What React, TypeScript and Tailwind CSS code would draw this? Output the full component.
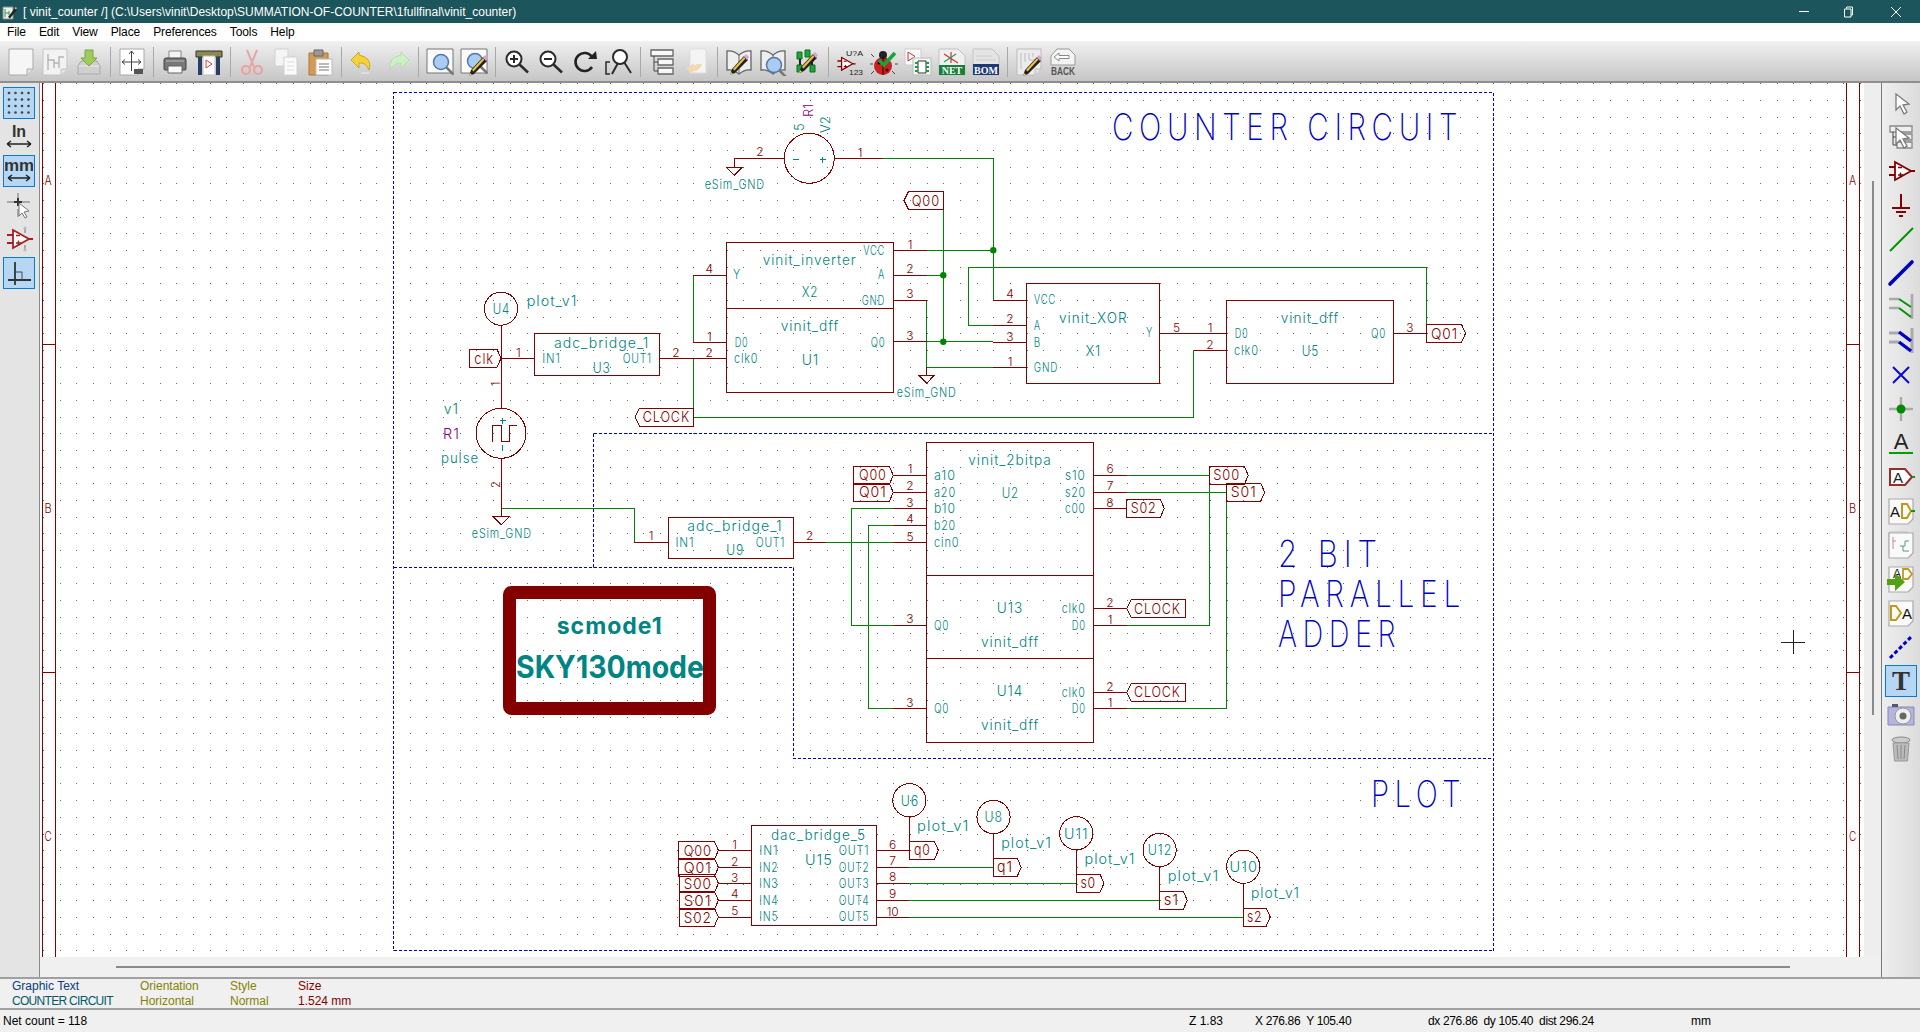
import type { ReactNode } from 'react';

const RED = '#840000';
const GREEN = '#008400';
const TEAL = '#008484';
const PURPLE = '#840084';
const BLUE = '#0000c2';
const STROKE_FONT = "Inter, 'Liberation Sans', sans-serif";

// ---------- schematic data, coordinates follow the sheet ----------

const redLines = [
  '734.3,167 734.3,158.3 784.3,158.3', '834.3,158.3 883.3,158.3',
  '893.3,250.3 926.6,250.3', '893.3,275.3 926.6,275.3', '893.3,300.3 926.6,300.3', '893.3,341.7 926.6,341.7',
  '693.3,275.3 726.7,275.3', '693.3,342 726.7,342', '660,358.3 726.7,358.3',
  '501,324.5 501,408.3', '501,358.3 534.3,358.3', '501,458.3 501,516.7',
  '926.6,367.3 926.6,375', '634.4,542.3 668.5,542.3', '793.6,542.3 825.8,542.3', '893.3,542.3 926.7,542.3',
  '993.3,300.3 1026.6,300.3', '993.3,325.3 1026.6,325.3', '993.3,342 1026.6,342', '993.3,367.3 1026.6,367.3',
  '1159.4,333.3 1226.3,333.3', '1193.8,350.7 1226.3,350.7', '1393.6,333.3 1426.5,333.3',
  '893.3,475.3 926.7,475.3', '893.3,492.3 926.7,492.3', '893.3,508.3 926.7,508.3', '893.3,525.3 926.7,525.3',
  '893.3,625.3 926.7,625.3', '893.3,708.3 926.7,708.3',
  '1093.3,475.3 1126.7,475.3', '1093.3,492.3 1126.7,492.3', '1093.3,508.3 1126.7,508.3',
  '1093.3,608.3 1126.7,608.3', '1093.3,625.3 1126.7,625.3', '1093.3,692.3 1126.7,692.3', '1093.3,708.3 1126.7,708.3',
  '718.4,850.3 751.4,850.3', '718.4,867.3 751.4,867.3', '718.4,883.3 751.4,883.3', '718.4,900.3 751.4,900.3', '718.4,917 751.4,917',
  '876.3,850.3 909,850.3', '876.3,867.3 909,867.3', '876.3,883.3 909,883.3', '876.3,900.3 909,900.3', '876.3,917 909,917',
  '909.4,817 909.4,841.3', '993.5,833.7 993.5,858.3', '1076.3,850 1076.3,875', '1159.6,866.7 1159.6,891.7', '1243.3,883.3 1243.3,908.3',
];

const greenLines = [
  '883.3,158.3 993.3,158.3 993.3,300.3', '926.6,250.3 993.3,250.3', '943.3,209 943.3,341.7', '926.6,275.3 943.3,275.3',
  '926.6,300.3 926.6,367.3 993.3,367.3', '926.6,341.7 993.3,341.7',
  '693.3,275.3 693.3,342', '693.3,358.3 693.3,417.3 1193.8,417.3 1193.8,350.7',
  '993.3,325.3 968.8,325.3 968.8,267.3 1426.5,267.3 1426.5,333.3',
  '501,508.3 634.4,508.3 634.4,542.3', '825.8,542.3 893.3,542.3',
  '893.3,508.3 851.7,508.3 851.7,625.3 893.3,625.3', '893.3,525.3 868.3,525.3 868.3,708.3 893.3,708.3',
  '1126.7,475.3 1209.3,475.3 1209.3,625.3 1126.7,625.3', '1126.7,492.3 1226.7,492.3 1226.7,708.3 1126.7,708.3',
  '909,867.3 993.9,867.3', '909,883.3 1076.3,883.3', '909,900.3 1159.6,900.3', '909,917 1243.7,917',
];

const boxes = [
  [726.7, 242.7, 166.6, 149.6], [534.3, 333.7, 125, 41.6], [1026.6, 283.3, 132.8, 100], [1226.3, 300.3, 167.3, 83],
  [668.5, 517.3, 125.1, 41], [926.7, 442.3, 166.6, 300], [751.4, 825.7, 124.9, 99.3],
];

const sepLines = ['726.7,308.3 893.3,308.3', '926.7,575.3 1093.3,575.3', '926.7,658.3 1093.3,658.3'];

const circles = [
  [809.3, 158.3, 25], [501, 433.3, 25], [501, 308.7, 16.6], [909.4, 800.3, 16.6], [993.5, 817, 16.6],
  [1076.3, 833.3, 16.6], [1159.6, 850, 16.6], [1243.3, 866.7, 16.6],
];

const grounds = [[734.3, 167], [926.6, 375], [501.3, 516.7]];
const junctions = [[993.3, 250.3], [943.3, 275.3], [943.3, 341.7]];

// text, x start, x end, baseline, optional size
const teal: [string, number, number, number, number?][] = [
  ['eSim_GND', 704.7, 765, 189], ['eSim_GND', 896.7, 956.7, 397.3], ['eSim_GND', 471.8, 531.8, 538.3],
  ['vinit_inverter', 762.7, 856.7, 265, 14], ['VCC', 863.3, 885, 255], ['A', 878, 885, 279.3], ['GND', 861.7, 885, 305],
  ['Y', 733, 741, 279], ['X2', 801.7, 818.3, 297.3, 14], ['vinit_dff', 780.7, 839.3, 330.7, 14],
  ['D0', 734.7, 748.3, 346.7], ['clk0', 734, 758.3, 363.3], ['Q0', 870.7, 885.3, 346.7], ['U1', 801.7, 819.3, 364.7, 14],
  ['U4', 492.7, 510, 314, 14], ['plot_v1', 526.7, 577.3, 306, 14],
  ['adc_bridge_1', 554, 649.3, 348.3, 14], ['IN1', 542.3, 560.7, 363.3], ['OUT1', 622.7, 652, 363.3], ['U3', 592.7, 610.7, 372.7, 14],
  ['v1', 443.8, 459.1, 414.3, 14], ['pulse', 441, 479, 463.3, 14],
  ['adc_bridge_1', 687.2, 782.5, 531, 14], ['IN1', 675.4, 694.5, 546.7], ['OUT1', 755.7, 785.2, 546.7], ['U9', 726.3, 744.2, 555, 14],
  ['VCC', 1033.8, 1056, 304.3], ['A', 1033.8, 1041, 329.7], ['B', 1033.8, 1041, 346.7], ['GND', 1033.8, 1058, 371.7],
  ['vinit_XOR', 1059, 1127.6, 322.7, 14], ['X1', 1085.5, 1101.2, 355.7, 14], ['Y', 1146, 1153, 337.3],
  ['D0', 1234.8, 1248.5, 337.7], ['clk0', 1234, 1258.9, 355], ['vinit_dff', 1280.7, 1339.2, 322.7, 14], ['U5', 1301.7, 1319, 355.7, 14], ['Q0', 1371, 1386, 337.7],
  ['vinit_2bitpa', 968.3, 1051.7, 465, 14], ['a10', 934, 956, 480], ['a20', 934, 956, 496.7], ['b10', 934, 956, 513.3], ['b20', 934, 956, 530], ['cin0', 934, 959.3, 546.7],
  ['U2', 1001.7, 1019, 497.7, 14], ['s10', 1065, 1085.7, 480], ['s20', 1065, 1085.7, 496.7], ['c00', 1065, 1085.7, 513.3],
  ['U13', 996.7, 1023.3, 612.7, 14], ['clk0', 1061.7, 1085.7, 613.3], ['D0', 1071.7, 1085.7, 630], ['Q0', 934, 949.3, 630], ['vinit_dff', 981, 1039.3, 646.7, 14],
  ['U14', 996.7, 1023.3, 696, 14], ['clk0', 1061.7, 1085.7, 696.7], ['D0', 1071.7, 1085.7, 713.3], ['Q0', 934, 949.3, 713.3], ['vinit_dff', 981, 1039.3, 730, 14],
  ['dac_bridge_5', 771, 866.1, 840, 14], ['IN1', 759.2, 778.4, 854.7], ['IN2', 759.2, 778.4, 871.7], ['IN3', 759.2, 778.4, 888], ['IN4', 759.2, 778.4, 904.7], ['IN5', 759.2, 778.4, 921.3],
  ['U15', 804.9, 832.7, 865, 14], ['OUT1', 838.8, 869.4, 854.7], ['OUT2', 838.8, 869.4, 871.7], ['OUT3', 838.8, 869.4, 888], ['OUT4', 838.8, 869.4, 904.7], ['OUT5', 838.8, 869.4, 921.3],
  ['U6', 900.8, 919.2, 805.7, 14], ['plot_v1', 917.1, 969.4, 831, 14], ['U8', 984.5, 1002.8, 822.3, 14], ['plot_v1', 1001.2, 1051.8, 847.7, 14],
  ['U11', 1064, 1088.6, 838.7, 14], ['plot_v1', 1084.5, 1135.5, 864.3, 14], ['U12', 1147.8, 1172.2, 855.3, 14], ['plot_v1', 1167.8, 1219.2, 881, 14],
  ['U10', 1229.4, 1258, 872, 14], ['plot_v1', 1251, 1300, 898.3, 14],
];

// text, centre x, baseline
const pinNums: [string, number, number][] = [
  ['2', 760, 156], ['1', 860, 156.7], ['1', 910, 248.7], ['2', 910, 273], ['3', 910, 298], ['3', 910, 340], ['4', 709.3, 272.7], ['1', 709.3, 340.7], ['2', 709.3, 356.7], ['2', 676, 356.7], ['1', 518.3, 356.7],
  ['1', 651, 540], ['2', 809.7, 540], ['4', 1010, 297.7], ['2', 1010, 323.3], ['3', 1010, 340.7], ['1', 1010, 365.7], ['5', 1176.6, 331.7], ['1', 1210, 331.7], ['2', 1210, 349], ['3', 1410, 331.7],
  ['1', 910, 473.3], ['2', 910, 490], ['3', 910, 506.7], ['4', 910, 522.7], ['5', 910, 540.7], ['3', 910, 623.3], ['3', 910, 706.7],
  ['6', 1110, 473.3], ['7', 1110, 490], ['8', 1110, 506.7], ['2', 1110, 606.7], ['1', 1110, 624], ['2', 1110, 690.7], ['1', 1110, 706.7],
  ['1', 734.7, 848.7], ['2', 734.7, 866], ['3', 734.7, 882], ['4', 734.7, 898], ['5', 734.7, 915.3],
  ['6', 892.7, 848.7], ['7', 892.7, 865], ['8', 892.7, 881], ['9', 892.7, 898], ['10', 892.7, 915.7],
];

// text, x1, x2, centre y, point side, text x1, text x2, baseline
const flags: [string, number, number, number, 'l' | 'r', number, number, number][] = [
  ['Q00', 904, 943.3, 200.5, 'l', 911.7, 940, 206],
  ['clk', 469.3, 501, 358.3, 'r', 474.3, 494, 364],
  ['CLOCK', 635, 693.3, 417.3, 'l', 642.7, 690, 422.3],
  ['Q01', 1426.5, 1465.5, 333.3, 'r', 1431, 1458, 338.7],
  ['Q00', 853.3, 893.3, 475.3, 'r', 859, 886.7, 480],
  ['Q01', 853.3, 893.3, 492.3, 'r', 859, 886.7, 497],
  ['S00', 1209.3, 1248.3, 475.3, 'r', 1213.3, 1240, 480],
  ['S01', 1226.7, 1264.7, 492.3, 'r', 1230.7, 1256.7, 497],
  ['S02', 1126.7, 1164.3, 508.3, 'r', 1130.7, 1156.7, 513.3],
  ['CLOCK', 1126.7, 1185.3, 608.3, 'l', 1134, 1180.7, 614],
  ['CLOCK', 1126.7, 1185.3, 692.3, 'l', 1134, 1180.7, 697.3],
  ['Q00', 678.4, 718.4, 850.3, 'r', 683.7, 711.8, 856],
  ['Q01', 678.4, 718.4, 867.3, 'r', 683.7, 711.8, 872.7],
  ['S00', 679.6, 718.4, 883.3, 'r', 683.7, 711.8, 889],
  ['S01', 679.6, 718.4, 900.3, 'r', 683.7, 711.8, 906],
  ['S02', 679.6, 718.4, 917, 'r', 683.7, 711.8, 922.7],
  ['q0', 909, 938.4, 850.3, 'r', 913.9, 930.6, 855],
  ['q1', 993.9, 1021.2, 867.3, 'r', 997, 1013, 872],
  ['s0', 1076.3, 1104, 883.3, 'r', 1080.4, 1096, 888.3],
  ['s1', 1159.6, 1187.3, 900.3, 'r', 1163.7, 1179.2, 905.3],
  ['s2', 1243.7, 1270.2, 917, 'r', 1247, 1262.4, 922],
];

const blueText: [string, number, number, number][] = [
  ['COUNTER CIRCUIT', 1112, 1463, 140],
  ['2 BIT', 1278, 1383, 567.3],
  ['PARALLEL', 1278, 1466, 607.3],
  ['ADDER', 1278, 1401, 647.3],
  ['PLOT', 1371, 1466, 807],
];

function gridDots() {
  let d = '';
  for (let i = 0; i < 110; i++) {
    for (let j = 0; j < 53; j++) {
      const x = Math.round(43.07 + 16.67 * i);
      const y = Math.round(83.35 + 16.67 * j);
      d += `M${x} ${y}h1v1h-1z`;
    }
  }
  return d;
}

function Stext({ t, x1, x2, y, size = 13, color = TEAL }: { t: string; x1: number; x2: number; y: number; size?: number; color?: string }) {
  return (
    <text
      x={x1}
      y={y}
      fontSize={size}
      fill={color}
      fontWeight={300}
      letterSpacing={1}
      textLength={x2 - x1}
      lengthAdjust="spacingAndGlyphs"
      fontFamily={STROKE_FONT}
    >
      {t}
    </text>
  );
}

function Schematic() {
  return (
    <svg viewBox="40 83 1824 874" width={1824} height={874} className="block">
      <path d={gridDots()} fill="#6a6a6a" shapeRendering="crispEdges" />

      <g shapeRendering="crispEdges" fill="none" strokeWidth={1}>
        {/* page border */}
        <g stroke={RED}>
          {['42,83 42,957', '55,83 55,957', '1846.5,83 1846.5,957', '1859.5,83 1859.5,957', '42,344 55,344', '42,672 55,672', '1846.5,344 1859.5,344', '1846.5,672 1859.5,672'].map((p) => (
            <polyline key={p} points={p} />
          ))}
        </g>

        {/* dashed section outlines */}
        <g stroke={BLUE} strokeDasharray="3 2">
          <rect x={393.5} y={92.5} width={1100} height={858} />
          <polyline points="593.5,433.5 1493.5,433.5" />
          <polyline points="593.5,433.5 593.5,567.5" />
          <polyline points="393.5,567.5 793.5,567.5" />
          <polyline points="793.5,567.5 793.5,758.5 1493.5,758.5" />
        </g>

        <g stroke={GREEN}>
          {greenLines.map((p) => (
            <polyline key={p} points={p} />
          ))}
        </g>
        <g stroke={RED}>
          {redLines.map((p) => (
            <polyline key={p} points={p} />
          ))}
          {sepLines.map((p) => (
            <polyline key={p} points={p} />
          ))}
          {boxes.map(([x, y, w, h]) => (
            <rect key={`${x}-${y}`} x={x} y={y} width={w} height={h} />
          ))}
          {circles.map(([x, y, r]) => (
            <circle key={`${x}-${y}`} cx={x} cy={y} r={r} />
          ))}
          {grounds.map(([x, y]) => (
            <polygon key={`${x}-${y}`} points={`${x - 8},${y} ${x + 8},${y} ${x},${y + 8.3}`} />
          ))}
          {/* pulse shape and source polarity */}
          <polyline points="492.3,441.7 492.3,425 501,425 501,441.7 509.3,441.7 509.3,425 516.7,425" />
          <polyline points="499.7,420.7 505.7,420.7" stroke={TEAL} />
          <polyline points="502.7,417.7 502.7,423.7" stroke={TEAL} />
          <polyline points="502.7,445 502.7,450.7" stroke={TEAL} />
          <polyline points="793,159.7 799,159.7" stroke={TEAL} />
          <polyline points="819.7,159.7 825.7,159.7" stroke={TEAL} />
          <polyline points="822.7,156.7 822.7,162.7" stroke={TEAL} />
          {flags.map(([t, x1, x2, y, side]) => (
            <polygon
              key={`${t}-${x1}-${y}`}
              points={
                side === 'r'
                  ? `${x1},${y - 9} ${x2 - 4},${y - 9} ${x2},${y} ${x2 - 4},${y + 9} ${x1},${y + 9}`
                  : `${x1 + 4.5},${y - 9} ${x2},${y - 9} ${x2},${y + 9} ${x1 + 4.5},${y + 9} ${x1},${y}`
              }
            />
          ))}
        </g>

        {/* crosshair */}
        <g stroke="#222">
          <polyline points="1781,642.5 1805,642.5" />
          <polyline points="1793.5,630 1793.5,654" />
        </g>
      </g>

      {junctions.map(([x, y]) => (
        <circle key={`${x}-${y}`} cx={x} cy={y} r={3.2} fill={GREEN} />
      ))}

      {/* sheet model box */}
      <rect x={509.5} y={592.5} width={200} height={116} rx={2} fill="none" stroke={RED} strokeWidth={13} />

      {teal.map(([t, x1, x2, y, size]) => (
        <Stext key={`${t}-${x1}-${y}`} t={t} x1={x1} x2={x2} y={y} size={size ?? 13} />
      ))}
      {pinNums.map(([t, x, y]) => (
        <text key={`${t}-${x}-${y}`} x={x} y={y} fontSize={12} fontWeight={300} textAnchor="middle" fill={RED} fontFamily={STROKE_FONT}>
          {t}
        </text>
      ))}
      {flags.map(([t, x1, , y, , tx1, tx2, by]) => (
        <Stext key={`${t}-${x1}-${y}`} t={t} x1={tx1} x2={tx2} y={by} size={15} color={RED} />
      ))}
      {blueText.map(([t, x1, x2, y]) => (
        <text
          key={t}
          x={x1}
          y={y}
          fontSize={37}
          fill="#0000c8"
          fontWeight={200}
          letterSpacing={7}
          textLength={x2 - x1}
          lengthAdjust="spacingAndGlyphs"
          fontFamily={STROKE_FONT}
        >
          {t}
        </text>
      ))}

      <Stext t="A" x1={44.5} x2={52.5} y={185} color={RED} />
      <Stext t="B" x1={44.5} x2={52.5} y={513} color={RED} />
      <Stext t="C" x1={44.5} x2={52.5} y={841} color={RED} />
      <Stext t="A" x1={1849} x2={1857} y={185} color={RED} />
      <Stext t="B" x1={1849} x2={1857} y={513} color={RED} />
      <Stext t="C" x1={1849} x2={1857} y={841} color={RED} />

      <Stext t="R1" x1={443} x2={460} y={439.3} size={14} color={PURPLE} />
      <g fontFamily={STROKE_FONT} fontSize={13} fontWeight={300}>
        <text transform="rotate(-90 804 131)" x={804} y={131} fill={TEAL}>5</text>
        <text transform="rotate(-90 813 117)" x={813} y={117} fill={PURPLE}>R1</text>
        <text transform="rotate(-90 830 133)" x={830} y={133} fill={TEAL}>V2</text>
        <text transform="rotate(-90 500 386)" x={500} y={386} fontSize={11} fill={RED}>1</text>
        <text transform="rotate(-90 499.5 488)" x={499.5} y={488} fontSize={11} fill={RED}>2</text>
      </g>

      <text x={556.7} y={634.3} fontSize={23} fontWeight={700} fill={TEAL} letterSpacing={1} textLength={106} lengthAdjust="spacingAndGlyphs" fontFamily={STROKE_FONT}>
        scmode1
      </text>
      <text x={516} y={678.3} fontSize={31} fontWeight={700} fill={TEAL} textLength={188} lengthAdjust="spacingAndGlyphs" fontFamily={STROKE_FONT}>
        SKY130mode
      </text>
    </svg>
  );
}

// ---------- toolbar icons ----------

function Ic({ children, size = 28 }: { children: ReactNode; size?: number }) {
  return (
    <svg viewBox="0 0 28 28" width={size} height={size} className="block">
      {children}
    </svg>
  );
}

function Page({ fill = '#fff', line = '#aaa' }: { fill?: string; line?: string }) {
  return (
    <>
      <path d="M2 1h24v20l-6 6H2z" fill={fill} stroke={line} />
      <path d="M26 21h-6v6" fill="#e4e4e4" stroke={line} />
    </>
  );
}

function Pencil({ x = 0, y = 0 }: { x?: number; y?: number }) {
  return (
    <g transform={`translate(${x} ${y})`}>
      <path d="M3 25l2-6 12-13 4 4L8 23z" fill="#222" />
      <path d="M6 19l11-12 1.5 1.5L7.5 20.5z" fill="#f0c040" />
      <path d="M17 6l2-2 3 3-2 3z" fill="#d9a0d9" />
      <path d="M3 25l1-3 2 2z" fill="#f3d27a" />
    </g>
  );
}

function Mag({ x = 0, y = 0 }: { x?: number; y?: number }) {
  return (
    <g transform={`translate(${x} ${y})`}>
      <circle cx="12" cy="12" r="7.5" fill="#a9cdf2" stroke="#5577aa" strokeWidth="1.5" />
      <path d="M17.5 17.5l7 7" stroke="#777" strokeWidth="2.5" />
    </g>
  );
}

function ZoomGlass({ mark }: { mark?: ReactNode }) {
  return (
    <Ic>
      <circle cx="11" cy="11" r="7.5" fill="#fff" stroke="#2a2a2a" strokeWidth="2" />
      <path d="M16.5 16.5l8.5 8" stroke="#2a2a2a" strokeWidth="2.5" />
      {mark}
    </Ic>
  );
}

function OpAmp({ color = RED }: { color?: string }) {
  return (
    <g fill="none" stroke={color} strokeWidth="1.8">
      <path d="M8 5v18l16-9z" fill="#fff" />
      <path d="M2 10h6M2 18h6M24 14h4" />
      <path d="M11 10.5h4M11 18h5M13.5 15.5v5" strokeWidth="1.4" />
    </g>
  );
}

const topTools: (ReactNode | null)[] = [
  <Ic key="new"><Page fill="#f6f6f6" /></Ic>,
  <Ic key="sch">
    <Page fill="#f2f2f2" line="#c4c4c4" />
    <path d="M7 6v16M7 12h6v8M13 15h5v-6h5M18 15v5" fill="none" stroke="#b4b4b4" strokeWidth="1.4" />
  </Ic>,
  <Ic key="save">
    <path d="M3 18l3-5h16l3 5v8H3z" fill="#cfcfcf" stroke="#aaa" />
    <path d="M4 18h20" stroke="#eee" />
    <path d="M10 2h8v8h4l-8 8-8-8h4z" fill="#9ecb5a" stroke="#7ea53c" />
  </Ic>,
  null,
  <Ic key="page">
    <Page />
    <path d="M4 14h19M4 14l3-2.5M4 14l3 2.5M23 14l-3-2.5M23 14l-3 2.5M13.5 3v20M13.5 3l-2.5 3M13.5 3l2.5 3" fill="none" stroke="#444" strokeWidth="1" />
    <path d="M16 21h9v5h-9z" fill="#555" />
  </Ic>,
  null,
  <Ic key="print">
    <path d="M8 3h12v8H8z" fill="#f4f4f4" stroke="#888" />
    <path d="M3 12q0-2 2-2h18q2 0 2 2v9q0 1-1 1H4q-1 0-1-1z" fill="#777" stroke="#444" />
    <path d="M7 18h14v7H7z" fill="#fafafa" stroke="#666" />
    <path d="M5 13h18" stroke="#bbb" />
  </Ic>,
  <Ic key="plot">
    <path d="M1 3h26v6H1z" fill="#8a8a50" stroke="#333" />
    <path d="M3 9h4v18H3zM21 9h4v18h-4z" fill="#2b3f66" />
    <path d="M8 8h12v19H8z" fill="#fff" stroke="#bbb" />
    <path d="M11 12v8l6-4z" fill="none" stroke="#d04040" />
  </Ic>,
  null,
  <Ic key="cut">
    <path d="M9 2l7 17M19 2L12 19" stroke="#e0a9a9" strokeWidth="2" />
    <circle cx="8" cy="22" r="4" fill="none" stroke="#efa0a0" strokeWidth="2.2" />
    <circle cx="20" cy="22" r="4" fill="none" stroke="#efa0a0" strokeWidth="2.2" />
  </Ic>,
  <Ic key="copy">
    <path d="M3 1h13v17H3z" fill="#f5f5f5" stroke="#d0d0d0" />
    <path d="M12 9h13v18H12z" fill="#fafafa" stroke="#d0d0d0" />
    <path d="M15 14h7M15 18h7M15 22h7" stroke="#ddd" />
  </Ic>,
  <Ic key="paste">
    <path d="M3 5h19v22H3z" fill="#d39a55" stroke="#a8763c" />
    <path d="M8 2h9v6H8z" fill="#9a9a9a" stroke="#666" />
    <path d="M10 11h16v16H10z" fill="#fff" stroke="#bbb" />
    <path d="M13 16h10M13 19h10M13 22h10" stroke="#777" />
  </Ic>,
  null,
  <Ic key="undo">
    <path d="M10 4L2 12l8 8v-5q7-1 10 7 4-12-10-15z" fill="#f3d23c" stroke="#c8a820" />
    <path d="M12 25h8" stroke="#ddd" strokeWidth="2" />
  </Ic>,
  <Ic key="redo">
    <path d="M18 4l8 8-8 8v-5q-7-1-10 7-4-12 10-15z" fill="#cdf0c4" stroke="#b4dcb0" />
  </Ic>,
  null,
  <Ic key="find">
    <path d="M1 1h26v24H1z" fill="#fafafa" stroke="#777" />
    <Mag x={3} y={2} />
  </Ic>,
  <Ic key="replace">
    <path d="M1 1h26v24H1z" fill="#fafafa" stroke="#777" />
    <Mag x={3} y={1} />
    <Pencil x={6} y={3} />
  </Ic>,
  null,
  <ZoomGlass key="zi" mark={<path d="M7 11h8M11 7v8" stroke="#2a2a2a" strokeWidth="2" />} />,
  <ZoomGlass key="zo" mark={<path d="M7 11h8" stroke="#2a2a2a" strokeWidth="2" />} />,
  <Ic key="redraw">
    <path d="M21 19a9 9 0 1 1 0-10" fill="none" stroke="#222" strokeWidth="2.6" />
    <path d="M17 11h9l-1-8z" fill="#222" />
  </Ic>,
  <Ic key="fit">
    <circle cx="15" cy="9" r="7" fill="#fff" stroke="#2a2a2a" strokeWidth="2" />
    <path d="M19 14l7 11M13 15l-6 11" stroke="#2a2a2a" strokeWidth="2" />
    <path d="M5 14H1v12h4" fill="none" stroke="#2a2a2a" strokeWidth="1.5" />
  </Ic>,
  null,
  <Ic key="tree">
    <path d="M3 2h22v6H3zM10 11h15v6H10zM10 20h15v6H10z" fill="#f8f8f8" stroke="#666" strokeWidth="1.3" />
    <path d="M6 8v15h4M6 14h4" fill="none" stroke="#444" />
  </Ic>,
  <Ic key="leave">
    <path d="M8 1h16v24H8z" fill="#f4f4f4" stroke="#ddd" />
    <path d="M20 16q-5-1-8 2v-3l-8 6 7 5v-3q6 1 9-7z" fill="#f4d8b0" />
  </Ic>,
  null,
  <Ic key="libedit">
    <path d="M14 7Q8 2 2 3v19q6-1 12 4 6-5 12-4V3q-6-1-12 4z" fill="#eee" stroke="#666" strokeWidth="1.3" />
    <path d="M14 7v19" stroke="#666" />
    <Pencil x={2} y={2} />
  </Ic>,
  <Ic key="libview">
    <path d="M14 7Q8 2 2 3v19q6-1 12 4 6-5 12-4V3q-6-1-12 4z" fill="#eee" stroke="#666" strokeWidth="1.3" />
    <path d="M14 7v19" stroke="#666" />
    <Mag x={3} y={5} />
  </Ic>,
  <Ic key="fp">
    <path d="M4 4h5v7H4zM4 17h5v7H4zM17 17h5v7h-5zM12 2h5v7h-5z" fill="#18a838" stroke="#0c6a20" />
    <path d="M7 11v6M19 9v8" stroke="#222" strokeWidth="2" />
    <Pencil x={3} y={0} />
  </Ic>,
  null,
  <Ic key="anno">
    <g transform="translate(0 6) scale(.7)"><OpAmp /></g>
    <text x="10" y="8" fontSize="8" textLength="17" lengthAdjust="spacingAndGlyphs" fontFamily="'Liberation Sans', sans-serif" fill="#222">U?A</text>
    <text x="13" y="27" fontSize="8" textLength="14" lengthAdjust="spacingAndGlyphs" fontFamily="'Liberation Sans', sans-serif" fill="#222">123</text>
  </Ic>,
  <Ic key="erc">
    <path d="M4 9l-3-3M22 9l3-3M3 16H0M25 16h3M4 23l-3 3M22 23l3 3" stroke="#444" />
    <ellipse cx="13" cy="18" rx="9" ry="9" fill="#cc2020" />
    <circle cx="13" cy="7" r="4" fill="#222" />
    <path d="M13 9v18" stroke="#300" />
    <circle cx="9" cy="15" r="1.5" fill="#200" /><circle cx="17" cy="22" r="1.5" fill="#200" />
    <path d="M9 12l5 5 11-12" fill="none" stroke="#14a53c" strokeWidth="3.6" />
  </Ic>,
  <Ic key="cvpcb">
    <path d="M1 1h16v16H1z" fill="#fafafa" stroke="#ccc" />
    <path d="M4 4v9l7-4.5z" fill="none" stroke="#cc3333" />
    <path d="M9 10h18v17H9z" fill="#f4f4f4" stroke="#bbb" />
    <path d="M14 13h8v12h-8z" fill="#fff" stroke="#333" />
    <path d="M11 15h3M11 19h3M11 23h3M22 15h3M22 19h3M22 23h3" stroke="#16a038" strokeWidth="2" />
  </Ic>,
  <Ic key="net">
    <path d="M1 1h19l7 7v19H1z" fill="#f0f0f0" stroke="#c4c4c4" />
    <path d="M6 6l14 9M13 4v11" stroke="#cc3333" strokeWidth="1.2" />
    <path d="M6 14l12-8" stroke="#22a040" strokeWidth="1.2" />
    <path d="M1 17h26v10H1z" fill="#16803a" />
    <text x="14" y="26" fontSize="10" fontWeight="700" textAnchor="middle" fontFamily="'Liberation Serif', serif" fill="#fff">NET</text>
  </Ic>,
  <Ic key="bom">
    <path d="M1 1h19l7 7v19H1z" fill="#e4e4e4" stroke="#c4c4c4" />
    <path d="M4 8h16M4 12h20" stroke="#ccc" />
    <path d="M1 16h26v11H1z" fill="#1d3a75" />
    <text x="14" y="25.5" fontSize="10" fontWeight="700" textAnchor="middle" fontFamily="'Liberation Serif', serif" fill="#fff">BOM</text>
  </Ic>,
  null,
  <Ic key="edit">
    <Page fill="#ececec" line="#bbb" />
    <path d="M6 5v16M10 5v9M14 5v7h8M18 5v4" fill="none" stroke="#bbb" />
    <Pencil x={5} y={3} />
  </Ic>,
  <Ic key="back">
    <path d="M8 1h12l6 6v10H2v-9z" fill="#f4f4f4" stroke="#999" />
    <path d="M5 9l5-4v2.5h10v3H10V13z" fill="#fff" stroke="#888" />
    <text x="14" y="26.5" fontSize="10" fontWeight="700" textAnchor="middle" textLength="24" lengthAdjust="spacingAndGlyphs" fontFamily="'Liberation Sans', sans-serif" fill="#555">BACK</text>
  </Ic>,
];

const Arrow = () => (
  <path d="M9 5l13 10-6 1 4 7-3 2-4-8-4 4z" fill="#fff" stroke="#7a7a7a" strokeWidth="1.3" />
);

const DocBack = () => (
  <path d="M2 2h24v20l-5 5H2z" fill="#fafafa" stroke="#aaa" strokeWidth="1.2" />
);

const rightTools: ReactNode[] = [
  <Ic key="arrow"><Arrow /></Ic>,
  <Ic key="hier">
    <path d="M3 3h22v6H3zM10 11h15v6H10zM10 19h15v6H10z" fill="#efefef" stroke="#888" strokeWidth="1.3" />
    <path d="M6 9v13h4M6 14h4" fill="none" stroke="#444" />
    <Arrow />
  </Ic>,
  <Ic key="sym"><OpAmp /></Ic>,
  <Ic key="gnd">
    <path d="M14 3v14M5 17h18M9 21h10" stroke={RED} strokeWidth="2" />
    <path d="M12 25h4" stroke={RED} strokeWidth="2" />
  </Ic>,
  <Ic key="wire"><path d="M3 26L26 3" stroke="#009400" strokeWidth="2" /></Ic>,
  <Ic key="bus"><path d="M3 25L25 3" stroke="#0000c8" strokeWidth="3.6" strokeLinecap="round" /></Ic>,
  <Ic key="wentry">
    <path d="M2 6h10M2 15h10M25 1v25" stroke="#aaa" strokeWidth="2.6" />
    <path d="M12 6l12 8M12 15l12 9" stroke="#009400" strokeWidth="2" />
  </Ic>,
  <Ic key="bentry">
    <path d="M2 6h10M2 15h10M25 1v25" stroke="#aaa" strokeWidth="3" />
    <path d="M12 5l12 9M12 15l12 9" stroke="#0000c8" strokeWidth="3.4" />
  </Ic>,
  <Ic key="nc"><path d="M6 6l16 16M22 6L6 22" stroke="#0a0ad0" strokeWidth="2" /></Ic>,
  <Ic key="junc">
    <path d="M2 14h24M14 2v24" stroke="#aaa" strokeWidth="2.4" />
    <circle cx="14" cy="14" r="4.5" fill="#008a00" />
  </Ic>,
  <Ic key="label">
    <text x="14" y="20" fontSize="22" textAnchor="middle" fontFamily="'Liberation Sans', sans-serif" fill="#222">A</text>
    <path d="M2 24h24" stroke="#00a000" strokeWidth="2" />
  </Ic>,
  <Ic key="glabel">
    <path d="M3 6h15l7 8-7 8H3z" fill="#fff" stroke="#9a2b2b" strokeWidth="2" />
    <path d="M25 14h3" stroke="#00a000" strokeWidth="2" />
    <text x="11" y="20" fontSize="15" textAnchor="middle" fontFamily="'Liberation Sans', sans-serif" fill="#222">A</text>
  </Ic>,
  <Ic key="hlabel">
    <DocBack />
    <text x="8" y="20" fontSize="15" textAnchor="middle" fontFamily="'Liberation Sans', sans-serif" fill="#111">A</text>
    <path d="M15 7h5l4 7-4 7h-5z" fill="none" stroke="#c09a14" strokeWidth="2" />
    <path d="M24 14h4" stroke="#00a000" strokeWidth="2" />
  </Ic>,
  <Ic key="sheet">
    <path d="M2 1h18v22H2z" fill="#f4f4f4" stroke="#bbb" />
    <path d="M6 3h18v22H6z" fill="#f8f8f8" stroke="#bbb" />
    <DocBack />
    <path d="M6 6v12M6 10h3" stroke="#cc8888" fill="none" />
    <path d="M13 15h5v-5h4M16 15v5h6" stroke="#5a9a7a" fill="none" />
  </Ic>,
  <Ic key="import">
    <DocBack />
    <text x="10" y="13" fontSize="12" textAnchor="middle" fontFamily="'Liberation Sans', sans-serif" fill="#111">A</text>
    <path d="M16 4h5l4 5-4 5h-5z" fill="none" stroke="#c09a14" strokeWidth="1.8" />
    <path d="M0 14h8V8l10 9-10 9v-6H0z" fill="#55a010" />
  </Ic>,
  <Ic key="da">
    <DocBack />
    <path d="M4 7h5l5 7-5 7H4z" fill="none" stroke="#c09a14" strokeWidth="2" />
    <text x="20" y="20" fontSize="15" textAnchor="middle" fontFamily="'Liberation Sans', sans-serif" fill="#111">A</text>
  </Ic>,
  <Ic key="dash"><path d="M3 25L25 3" stroke="#0000d8" strokeWidth="3" strokeDasharray="4 2.4" /></Ic>,
  <Ic key="text">
    <text x="14" y="23" fontSize="27" fontWeight="700" textAnchor="middle" fontFamily="'Liberation Serif', serif" fill="#333">T</text>
  </Ic>,
  <Ic key="cam">
    <path d="M1 6h26v18H1z" fill="#b4b4dc" stroke="#8888b8" />
    <circle cx="16" cy="15" r="8" fill="#eee" stroke="#999" />
    <circle cx="16" cy="15" r="3.5" fill="#666" />
    <path d="M5 3h6v3H5z" fill="#556" />
  </Ic>,
  <Ic key="trash">
    <ellipse cx="14" cy="5" rx="9" ry="3" fill="#ccc" stroke="#888" />
    <path d="M6 8l1.5 18h13L22 8z" fill="#bbb" stroke="#999" />
    <path d="M10 10l1 14M14 10v14M18 10l-1 14" stroke="#888" />
  </Ic>,
];

const gridIconDots = [5, 11.5, 18, 24.5];

const leftTools: { icon: ReactNode; on?: boolean }[] = [
  {
    on: true,
    icon: (
      <Ic>
        {gridIconDots.flatMap((x) =>
          gridIconDots.map((y) => <circle key={`${x}-${y}`} cx={x - 1} cy={y - 1} r={1.3} fill="#444" />),
        )}
      </Ic>
    ),
  },
  {
    icon: (
      <Ic>
        <text x="14" y="14" fontSize="16" fontWeight="700" textAnchor="middle" fontFamily="'Liberation Sans', sans-serif" fill="#333">In</text>
        <path d="M2 21h24M2 21l4-3M2 21l4 3M26 21l-4-3M26 21l-4 3" fill="none" stroke="#222" strokeWidth="1.5" />
      </Ic>
    ),
  },
  {
    on: true,
    icon: (
      <Ic>
        <text x="14" y="14" fontSize="17" fontWeight="700" textAnchor="middle" fontFamily="'Liberation Sans', sans-serif" fill="#333">mm</text>
        <path d="M3 21h22M3 21l4-3M3 21l4 3M25 21l-4-3M25 21l-4 3" fill="none" stroke="#222" strokeWidth="1.5" />
      </Ic>
    ),
  },
  {
    icon: (
      <Ic>
        <path d="M13 2v10M13 18v8M2 11h9M17 11h8" stroke="#aaa" strokeWidth="2" />
        <path d="M9 11h8M13 7v8" stroke="#333" strokeWidth="2" />
        <path d="M14 12l10 8-5 1 3 5-2 1-3-5-3 3z" fill="#fff" stroke="#777" />
      </Ic>
    ),
  },
  {
    icon: (
      <Ic>
        <path d="M20 2v6M20 20v6" stroke="#aaa" strokeWidth="2" />
        <circle cx="20" cy="3" r="1.6" fill="#bbb" />
        <circle cx="20" cy="25" r="1.6" fill="#bbb" />
        <OpAmp color="#a52020" />
      </Ic>
    ),
  },
  {
    on: true,
    icon: (
      <Ic>
        <path d="M3 21h23M10 3v23" stroke="#333" strokeWidth="1.8" />
        <path d="M10 13h7v8" fill="none" stroke="#444" />
      </Ic>
    ),
  },
];

function Sep() {
  return (
    <div className="w-[9px] flex justify-center">
      <div className="w-px h-[30px] bg-[#a8a8a8]" />
    </div>
  );
}

const menus = ['File', 'Edit', 'View', 'Place', 'Preferences', 'Tools', 'Help'];

export default function App() {
  return (
    <div className="w-[1920px] h-[1032px] overflow-hidden flex flex-col bg-[#f0f0f0] text-[12px] font-['Liberation_Sans',sans-serif] text-black">
      {/* title bar */}
      <div className="h-[23px] bg-[#1c565c] flex items-center text-white shrink-0">
        <svg viewBox="0 0 16 16" width={16} height={16} className="ml-[2px] mr-[5px]">
          <path d="M1 3h10v12H1z" fill="#eee" stroke="#888" />
          <path d="M3 5v8M3 9h4M7 7v4" stroke="#2a9a4a" fill="none" />
          <path d="M6 13l7-9 2 1.5-7 9z" fill="#222" />
          <path d="M12.5 4.5l1-1.5 1.5 1-1 1.5z" fill="#d9a0d9" />
        </svg>
        <span>{'[ vinit_counter /] (C:\\Users\\vinit\\Desktop\\SUMMATION-OF-COUNTER\\1fullfinal\\vinit_counter)'}</span>
        <div className="ml-auto flex items-center">
          <div className="w-[45px] flex justify-center"><div className="w-[10px] h-px bg-white" /></div>
          <div className="w-[45px] flex justify-center">
            <svg viewBox="0 0 10 12" width={10} height={12}>
              <path d="M2.5 2.5V1h6v8H7M.5 3h6.5v8H.5z" fill="none" stroke="#fff" />
            </svg>
          </div>
          <div className="w-[49px] flex justify-center">
            <svg viewBox="0 0 12 12" width={12} height={12}>
              <path d="M1 1l10 10M11 1L1 11" stroke="#fff" />
            </svg>
          </div>
        </div>
      </div>

      {/* menu */}
      <div className="h-[18px] bg-white flex items-center gap-[13px] pl-[7px] tracking-[-0.1px] shrink-0">
        {menus.map((m) => (
          <span key={m}>{m}</span>
        ))}
      </div>
      <div className="h-[2px] bg-[#f0f0f0] shrink-0" />

      {/* main toolbar */}
      <div className="h-[40px] shrink-0 flex items-center pl-1 bg-gradient-to-b from-[#eeeeee] to-[#c6c6c6] border-b-2 border-[#8f8f8f]">
        {topTools.map((tool, i) =>
          tool === null ? (
            <Sep key={i} />
          ) : (
            <div key={i} className="w-[34px] flex justify-center">
              {tool}
            </div>
          ),
        )}
      </div>

      <div className="flex-1 flex min-h-0">
        {/* left toolbar */}
        <div className="w-[39px] shrink-0 bg-[#e4e4e4] flex flex-col gap-[2px] pt-[4px] pl-[3px]">
          {leftTools.map((t, i) => (
            <div
              key={i}
              className={
                t.on
                  ? 'w-[32px] h-[32px] flex items-center justify-center bg-[#b6d7f3] border border-[#0a7ad8]'
                  : 'w-[32px] h-[32px] flex items-center justify-center'
              }
            >
              {t.icon}
            </div>
          ))}
        </div>

        <div className="w-px shrink-0 bg-[#8a8a8a]" />

        {/* canvas with scrollbars */}
        <div className="w-[1841px] shrink-0 flex flex-col">
          <div className="flex h-[874px]">
            <div className="w-[1824px] h-[874px] bg-white overflow-hidden">
              <Schematic />
            </div>
            <div className="w-[17px] h-[874px] bg-[#eeeeee] flex justify-center">
              <div className="w-[2px] h-[534px] mt-[98px] bg-[#8a8a8a]" />
            </div>
          </div>
          <div className="h-[20px] bg-[#f0f0f0] pl-[76px] pt-[9px]">
            <div className="w-[1674px] h-[2px] bg-[#8a8a8a]" />
          </div>
        </div>

        <div className="w-px shrink-0 bg-[#7a7a7a]" />

        {/* right toolbar */}
        <div className="flex-1 bg-gradient-to-r from-[#eeeeee] to-[#dcdcdc] flex flex-col items-center gap-[2px] pt-[4px] pr-[1px]">
          {rightTools.map((icon, i) => (
            <div
              key={i}
              className={
                i === 17
                  ? 'w-[32px] h-[32px] flex items-center justify-center bg-[#b6d7f3] border border-[#0a7ad8]'
                  : 'w-[32px] h-[32px] flex items-center justify-center'
              }
            >
              {icon}
            </div>
          ))}
        </div>
      </div>

      {/* message panel */}
      <div className="h-[33px] shrink-0 border-t-2 border-b-2 border-[#a0a0a0] flex pl-3 items-center bg-[#f0f0f0] leading-[15px]">
        <div className="w-[128px] text-[#08407a]">
          <div>Graphic Text</div>
          <div className="text-[#005a6a] tracking-[-0.7px]">COUNTER CIRCUIT</div>
        </div>
        <div className="w-[90px] text-[#848400]">
          <div>Orientation</div>
          <div>Horizontal</div>
        </div>
        <div className="w-[68px] text-[#848400]">
          <div>Style</div>
          <div>Normal</div>
        </div>
        <div className="text-[#840000]">
          <div>Size</div>
          <div>1.524 mm</div>
        </div>
      </div>

      {/* status bar */}
      <div className="h-[22px] shrink-0 flex items-center pl-[3px]">
        <div className="w-[1186px]">Net count = 118</div>
        <div className="w-[66px]">Z 1.83</div>
        <div className="w-[173px] tracking-[-0.35px]">X 276.86 &nbsp;Y 105.40</div>
        <div className="w-[263px] tracking-[-0.35px]">dx 276.86 &nbsp;dy 105.40 &nbsp;dist 296.24</div>
        <div>mm</div>
      </div>
    </div>
  );
}
